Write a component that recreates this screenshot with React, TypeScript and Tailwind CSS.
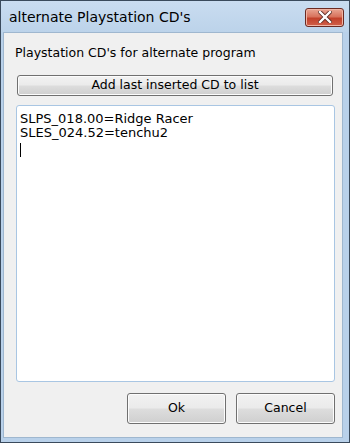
import React from "react";

const btn =
  "rounded-[3px] border border-[#707070] bg-[linear-gradient(to_bottom,#f2f2f2_0%,#ebebeb_48%,#dddddd_52%,#cfcfcf_100%)] shadow-[inset_0_0_0_1px_#fcfcfc] text-[12.5px] text-black leading-none flex items-center justify-center";

export default function App() {
  return (
    <div
      className="w-[350px] h-[443px] flex flex-col bg-[#b9d1ea] border border-[#3a4a5c] overflow-hidden"
      style={{ fontFamily: '"DejaVu Sans", "Liberation Sans", sans-serif' }}
    >
      {/* Title bar */}
      <div className="h-[31px] flex items-center pl-[8px] pr-[5px] bg-[linear-gradient(to_bottom,#c9dcf0_0%,#bcd3ea_100%)] shrink-0">
        <span className="text-[14px] text-black leading-none flex-1">alternate Playstation CD's</span>
        <div className="w-[39px] h-[19px] mt-[1px] rounded-[3px] border border-[#6b2a22] bg-[linear-gradient(to_bottom,#e9a593_0%,#d8735d_45%,#c2412b_55%,#d0604a_100%)] flex items-center justify-center shadow-[inset_0_0_0_1px_#f0b4a4]">
          <svg width="14" height="12" viewBox="0 0 14 12">
            <path d="M2 1 L12 11 M12 1 L2 11" stroke="#5a2a22" strokeWidth="4" strokeLinecap="square" />
            <path d="M2 1 L12 11 M12 1 L2 11" stroke="#ffffff" strokeWidth="2.4" strokeLinecap="square" />
          </svg>
        </div>
      </div>
      {/* Body frame */}
      <div className="flex-1 flex pl-[2px] pr-[6px] pb-[4px]">
        <div className="flex-1 bg-[#f0f0f0] flex flex-col border border-[#9fb7cf]">
          <div className="pl-[11px] pt-[12px] text-[12.5px] leading-[16px] text-black">
            Playstation CD's for alternate program
          </div>
          <div className="mt-[14px] ml-[13px] w-[316px] h-[21px]">
            <div className={btn + " w-full h-full"}>Add last inserted CD to list</div>
          </div>
          <div className="mt-[9px] ml-[12px] w-[319px] h-[277px] rounded-[3px] border border-[#a9c6e3] bg-white pl-[3px] pt-[6px] text-[13px] leading-[14px] text-black">
            <div>SLPS_018.00=Ridge Racer</div>
            <div>SLES_024.52=tenchu2</div>
            <div className="mt-[3px] w-[1px] h-[14px] bg-black" />
          </div>
          <div className="mt-[11px] flex justify-end gap-[10px] pr-[7px]">
            <div className={btn + " w-[99px] h-[31px]"}>Ok</div>
            <div className={btn + " w-[99px] h-[31px]"}>Cancel</div>
          </div>
        </div>
      </div>
    </div>
  );
}
